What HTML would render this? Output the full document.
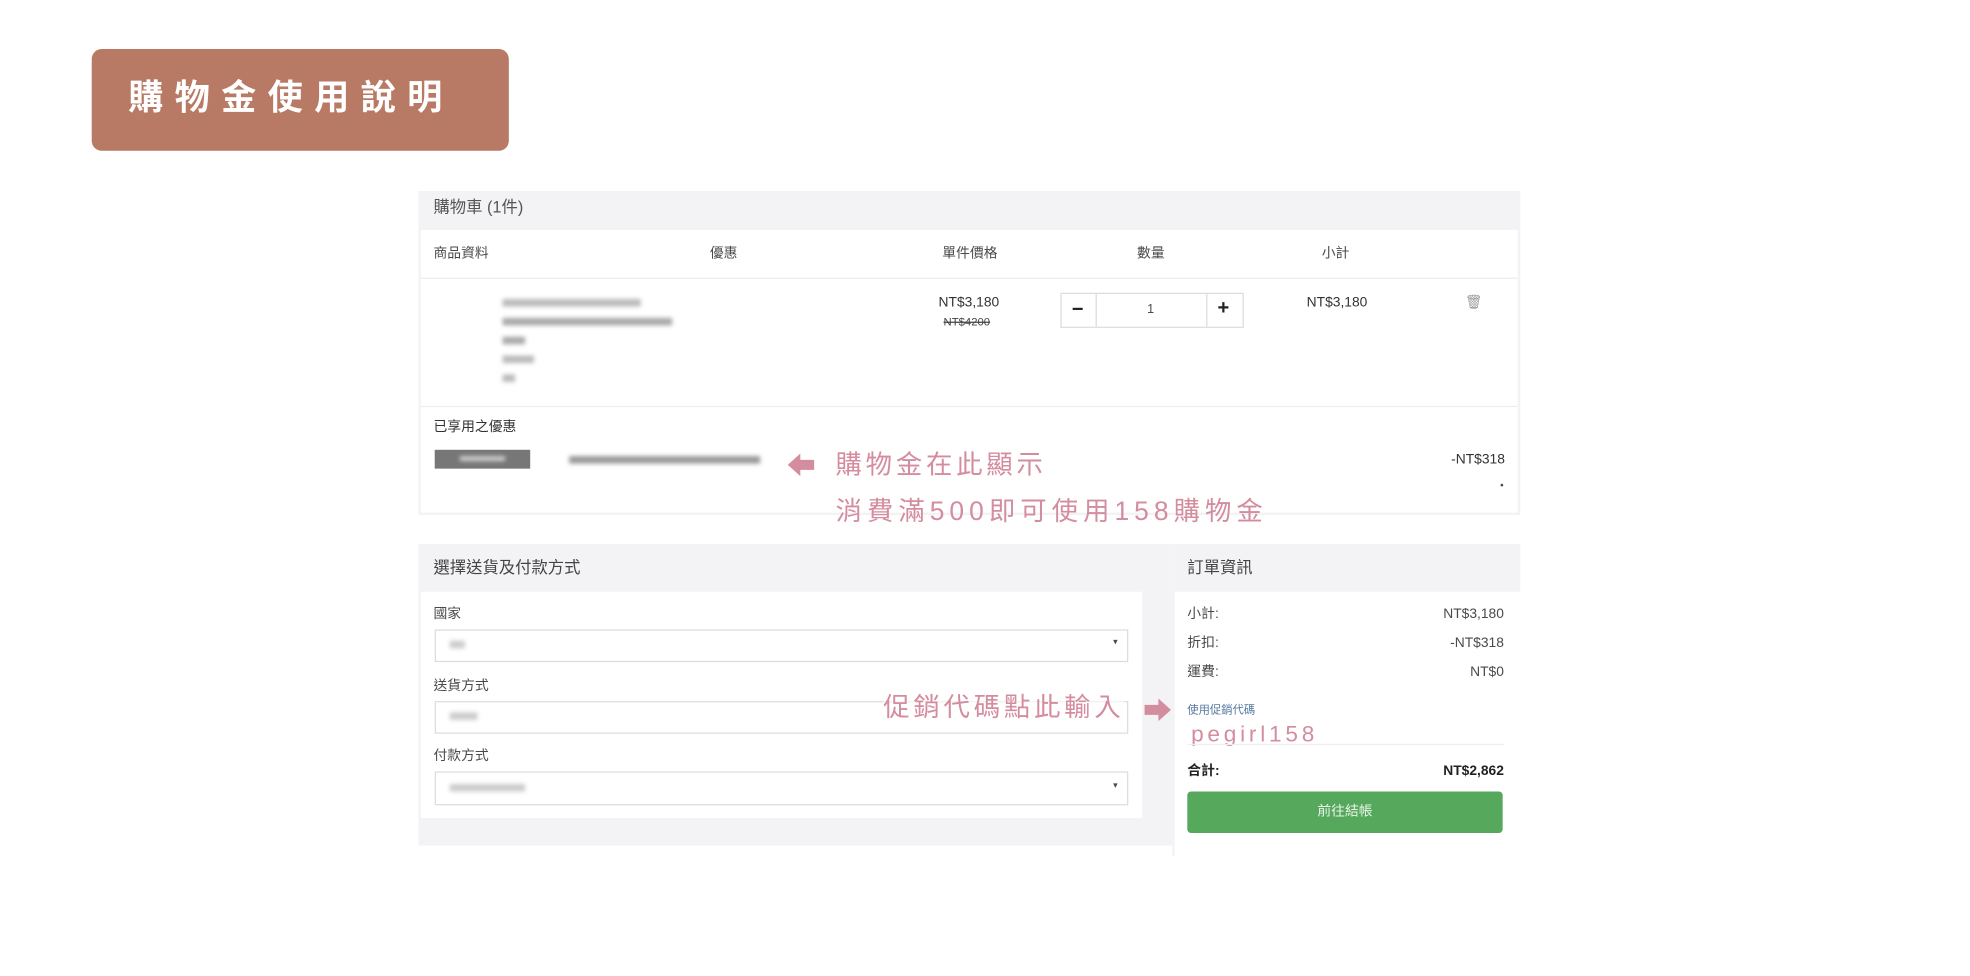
<!DOCTYPE html>
<html><head><meta charset="utf-8"><style>
html,body{margin:0;padding:0;background:#fff;width:1970px;height:976px;overflow:hidden}
#w{position:absolute;left:0;top:0;width:1568px;height:777px;transform:scale(1.2564);transform-origin:0 0;font-family:"Liberation Sans","Noto Sans CJK TC",sans-serif;color:#4a4a4a}
.a{position:absolute;white-space:nowrap}
.t11{font-size:11px;line-height:11px}
.pk{color:#d48d9f;font-size:21px;line-height:21px;letter-spacing:3px}
.bl{background:#aaa;filter:blur(1.6px);position:absolute;height:6px}
.box{position:absolute;border:1px solid #ddd;background:#fff}
</style></head><body><div id="w">
<div class="a" style="left:73px;top:39px;width:332px;height:81px;background:#b87a64;border-radius:8px"></div>
<div class="a" style="left:102px;top:62px;font-size:28px;line-height:32px;font-weight:bold;color:#fff;letter-spacing:9px">購物金使用說明</div>

<!-- cart panel -->
<div class="a" style="left:333px;top:152px;width:877px;height:258px;background:#f3f3f5"></div>
<div class="a" style="left:335px;top:183px;width:873px;height:225px;background:#fff"></div>
<div class="a" style="left:335px;top:221px;width:873px;height:1px;background:#eee"></div>
<div class="a" style="left:335px;top:323px;width:873px;height:1px;background:#eee"></div>
<div class="a" style="left:345px;top:158px;font-size:13px;line-height:14px;color:#555">購物車 (1件)</div>
<div class="a t11" style="left:345px;top:197px">商品資料</div>
<div class="a t11" style="left:565px;top:197px">優惠</div>
<div class="a t11" style="left:750px;top:197px">單件價格</div>
<div class="a t11" style="left:905px;top:197px">數量</div>
<div class="a t11" style="left:1052px;top:197px">小計</div>
<div class="bl" style="left:400px;top:238px;width:110px;background:#bbb"></div>
<div class="bl" style="left:400px;top:253px;width:135px"></div>
<div class="bl" style="left:400px;top:268px;width:18px"></div>
<div class="bl" style="left:400px;top:283px;width:25px;background:#bbb"></div>
<div class="bl" style="left:400px;top:298px;width:10px;background:#bbb"></div>
<div class="a t11" style="left:747px;top:236px;color:#333">NT$3,180</div>
<div class="a" style="left:751px;top:251px;font-size:9px;text-decoration:line-through;color:#444">NT$4200</div>
<div class="box" style="left:844px;top:233px;width:144px;height:26px"></div>
<div class="a" style="left:872px;top:234px;width:1px;height:26px;background:#ddd"></div>
<div class="a" style="left:960px;top:234px;width:1px;height:26px;background:#ddd"></div>
<div class="a" style="left:853px;top:238px;font-size:16px;font-weight:bold;color:#222">−</div>
<div class="a" style="left:969px;top:237px;font-size:16px;font-weight:bold;color:#222">+</div>
<div class="a" style="left:913px;top:241px;font-size:10px">1</div>
<div class="a t11" style="left:1040px;top:236px;color:#333">NT$3,180</div>
<div class="a" style="left:1166px;top:234px;font-size:11px;color:#999">🗑</div>
<div class="a t11" style="left:345px;top:335px;color:#333">已享用之優惠</div>
<div class="a" style="left:346px;top:358px;width:76px;height:15px;background:#777"></div>
<div class="bl" style="left:366px;top:363px;width:36px;height:4px;background:#ccc"></div>
<div class="bl" style="left:453px;top:363px;width:152px;background:#999"></div>
<svg class="a" style="left:627px;top:360px" width="22" height="20"><polygon points="0,10 10,1 10,6 21,6 21,14 10,14 10,19" fill="#d48d9f"/></svg>
<div class="a pk" style="left:665px;top:360px">購物金在此顯示</div>
<div class="a pk" style="left:665px;top:397px;letter-spacing:4px">消費滿500即可使用158購物金</div>
<div class="a t11" style="left:1155px;top:361px;color:#333">-NT$318</div>
<div class="a" style="left:1194px;top:382px;font-size:8px">•</div>

<!-- left panel -->
<div class="a" style="left:333px;top:433px;width:600px;height:240px;background:#f3f3f5"></div>
<div class="a" style="left:335px;top:471px;width:574px;height:180px;background:#fff"></div>
<div class="a" style="left:345px;top:445px;font-size:13px;line-height:14px;color:#444">選擇送貨及付款方式</div>
<div class="a t11" style="left:345px;top:484px">國家</div>
<div class="box" style="left:346px;top:501px;width:550px;height:24px"></div>
<div class="bl" style="left:358px;top:510px;width:12px;background:#ccc"></div>
<div class="a" style="left:886px;top:507px;font-size:7px">▾</div>
<div class="a t11" style="left:345px;top:541px">送貨方式</div>
<div class="box" style="left:346px;top:558px;width:550px;height:24px"></div>
<div class="bl" style="left:358px;top:567px;width:22px;background:#ccc"></div>
<div class="a t11" style="left:345px;top:597px">付款方式</div>
<div class="box" style="left:346px;top:614px;width:550px;height:25px"></div>
<div class="bl" style="left:358px;top:624px;width:60px;background:#ccc"></div>
<div class="a" style="left:886px;top:621px;font-size:7px">▾</div>
<div class="a pk" style="right:673px;top:553px;background:rgba(255,255,255,.6);letter-spacing:3px">促銷代碼點此輸入</div>
<svg class="a" style="left:910px;top:555px" width="23" height="20"><polygon points="22,10 12,1 12,6 1,6 1,14 12,14 12,19" fill="#d48d9f"/></svg>

<!-- right panel -->
<div class="a" style="left:933px;top:433px;width:277px;height:38px;background:#f3f3f5"></div>
<div class="a" style="left:933px;top:471px;width:2px;height:210px;background:#f3f3f5"></div>
<div class="a" style="left:945px;top:445px;font-size:13px;line-height:14px;color:#444">訂單資訊</div>
<div class="a t11" style="left:945px;top:484px">小計:</div><div class="a t11" style="right:371px;top:484px">NT$3,180</div>
<div class="a t11" style="left:945px;top:507px">折扣:</div><div class="a t11" style="right:371px;top:507px">-NT$318</div>
<div class="a t11" style="left:945px;top:530px">運費:</div><div class="a t11" style="right:371px;top:530px">NT$0</div>
<div class="a" style="left:945px;top:558px;font-size:9px;color:#5577a0">使用促銷代碼</div>
<div class="a" style="left:948px;top:574px;font-size:18px;color:#d48d9f;letter-spacing:3px">pegirl158</div>
<div class="a" style="left:945px;top:592px;width:252px;height:1px;background:#eee"></div>
<div class="a t11" style="left:945px;top:609px;font-weight:bold;color:#222">合計:</div><div class="a t11" style="right:371px;top:609px;font-weight:bold;color:#222">NT$2,862</div>
<div class="a" style="left:945px;top:630px;width:251px;height:33px;background:#56a85c;border-radius:3px;color:#e8f4e8;font-size:11px;line-height:33px;text-align:center">前往結帳</div>
</div></body></html>
